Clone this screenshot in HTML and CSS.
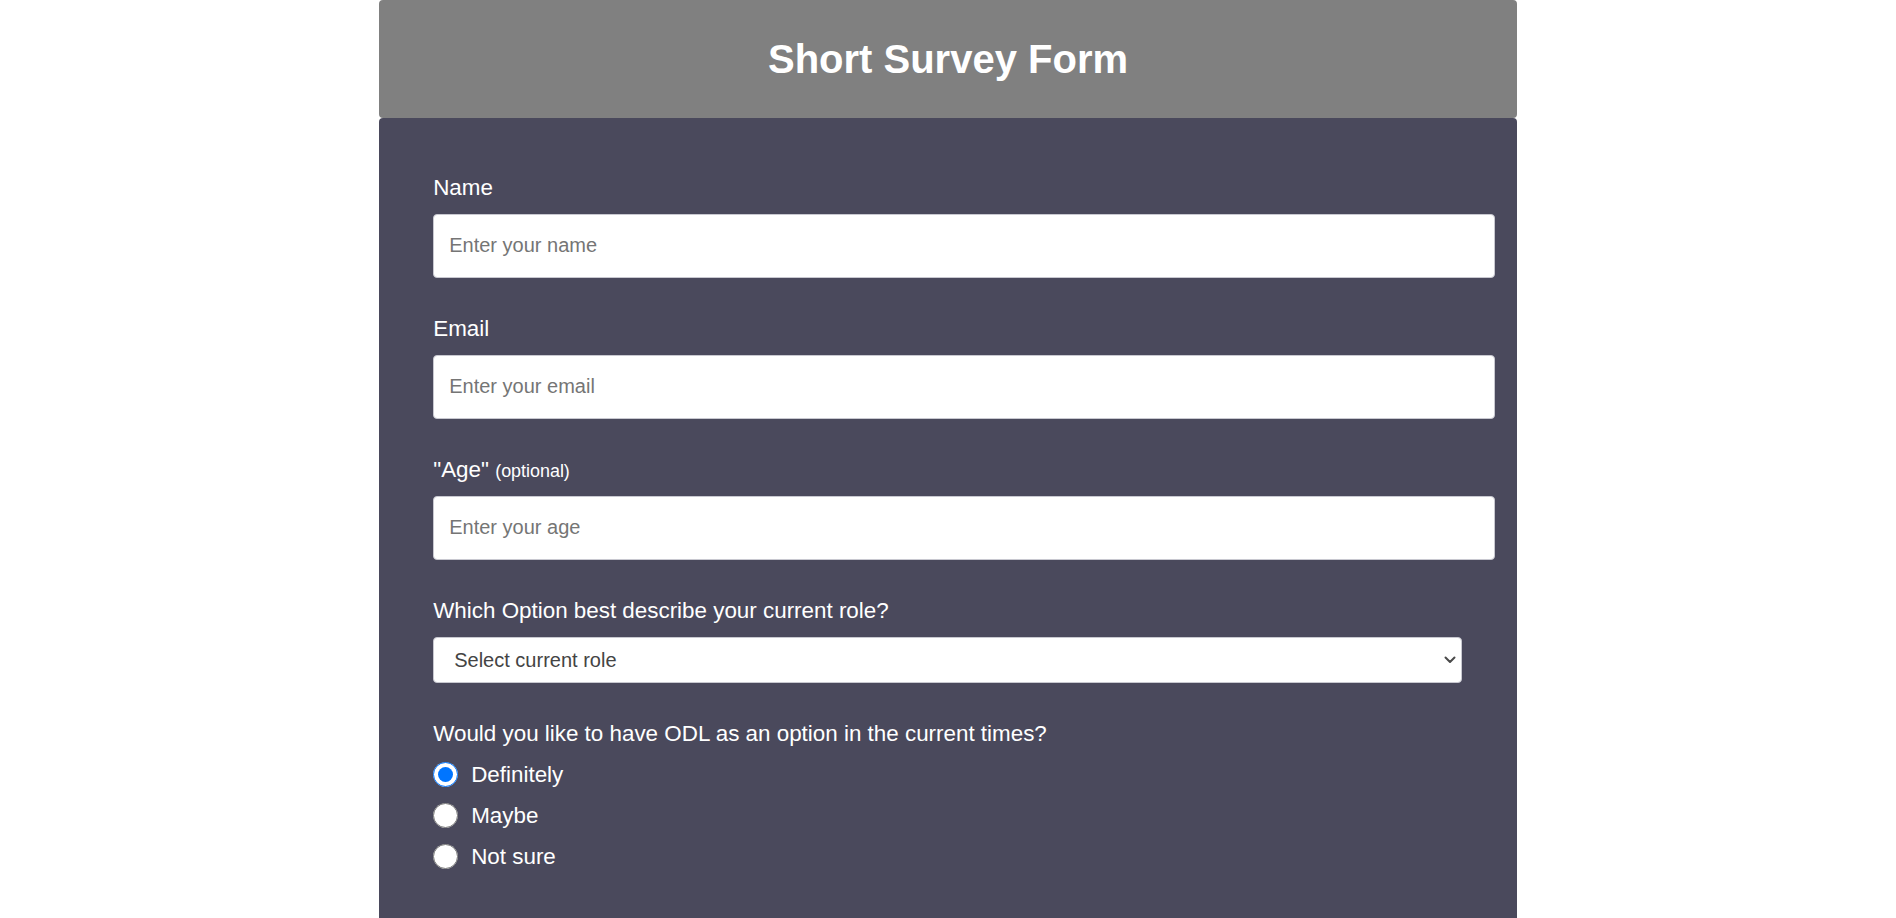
FILE: index.html
```html
<!DOCTYPE html>
<html lang="en">
<head>
<meta charset="utf-8">
<title>Short Survey Form</title>
<link rel="stylesheet" href="styles.css">
</head>
<body>
<div class="container">
  <header class="header">
    <h1 class="title">Short Survey Form</h1>
  </header>
  <form class="survey">
    <div class="group">
      <label class="label" for="name">Name</label>
      <input class="field" id="name" type="text" placeholder="Enter your name">
    </div>
    <div class="group">
      <label class="label" for="email">Email</label>
      <input class="field" id="email" type="email" placeholder="Enter your email">
    </div>
    <div class="group">
      <label class="label" for="age">"Age" <span class="small">(optional)</span></label>
      <input class="field" id="age" type="number" placeholder="Enter your age">
    </div>
    <div class="group">
      <label class="label" for="role">Which Option best describe your current role?</label>
      <div class="select-wrap">
        <select class="select" id="role">
          <option>Select current role</option>
          <option>Student</option>
          <option>Full Time Job</option>
          <option>Prefer not to say</option>
        </select>
        <svg class="chevron" width="12" height="8" viewBox="0 0 12 8" aria-hidden="true">
          <path d="M1.5 1.5 L6 6 L10.5 1.5" fill="none" stroke="#4a4a4a" stroke-width="2" stroke-linecap="round" stroke-linejoin="round"/>
        </svg>
      </div>
    </div>
    <div class="group radios">
      <p class="label">Would you like to have ODL as an option in the current times?</p>
      <label class="radio-row"><input class="radio" type="radio" name="odl" checked> Definitely</label>
      <label class="radio-row"><input class="radio" type="radio" name="odl"> Maybe</label>
      <label class="radio-row"><input class="radio" type="radio" name="odl"> Not sure</label>
    </div>
  </form>
</div>
</body>
</html>
```

FILE: styles.css
```css
html, body {
  margin: 0;
  padding: 0;
  background: #ffffff;
  font-family: "Liberation Sans", Arial, sans-serif;
}

.container {
  width: 60%;
  margin: 0 auto;
}

.header {
  height: 118px;
  background: #808080;
  border-radius: 4px;
  display: flex;
  align-items: center;
  justify-content: center;
}

.title {
  margin: 0;
  color: #ffffff;
  font-size: 40px;
  font-weight: bold;
}

.survey {
  background: #4a495c;
  border-radius: 4px;
  padding: 56.5px 22px 60px 54px;
  min-height: 900px;
  color: #ffffff;
  display: flex;
  flex-direction: column;
  gap: 38px;
}

.group {
  display: flex;
  flex-direction: column;
  gap: 13px;
}

.label {
  margin: 0;
  font-size: 22.4px;
  color: #ffffff;
}

.small {
  font-size: 0.8em;
}

.field {
  box-sizing: border-box;
  width: 100%;
  height: 64px;
  margin: 0;
  padding: 0 15px;
  border: 1px solid #c8c8d0;
  border-radius: 4px;
  background: #ffffff;
  font-family: "Liberation Sans", Arial, sans-serif;
  font-size: 20px;
  color: #333333;
}

.field::placeholder {
  color: #757575;
}

.select-wrap {
  position: relative;
  width: 1029px;
}

.select {
  box-sizing: border-box;
  width: 100%;
  height: 46px;
  margin: 0;
  padding: 0 30px 0 20px;
  border: 1px solid #c8c8d0;
  border-radius: 4px;
  background: #ffffff;
  font-family: "Liberation Sans", Arial, sans-serif;
  font-size: 20px;
  color: #444444;
  appearance: none;
  -webkit-appearance: none;
}

.chevron {
  position: absolute;
  right: 6px;
  top: 19px;
  pointer-events: none;
}

.radios {
  gap: 15px;
}

.radio-row {
  display: flex;
  align-items: center;
  gap: 13px;
  font-size: 22.4px;
  height: 26px;
}

.radio {
  width: 25px;
  height: 25px;
  margin: 0;
}
```
